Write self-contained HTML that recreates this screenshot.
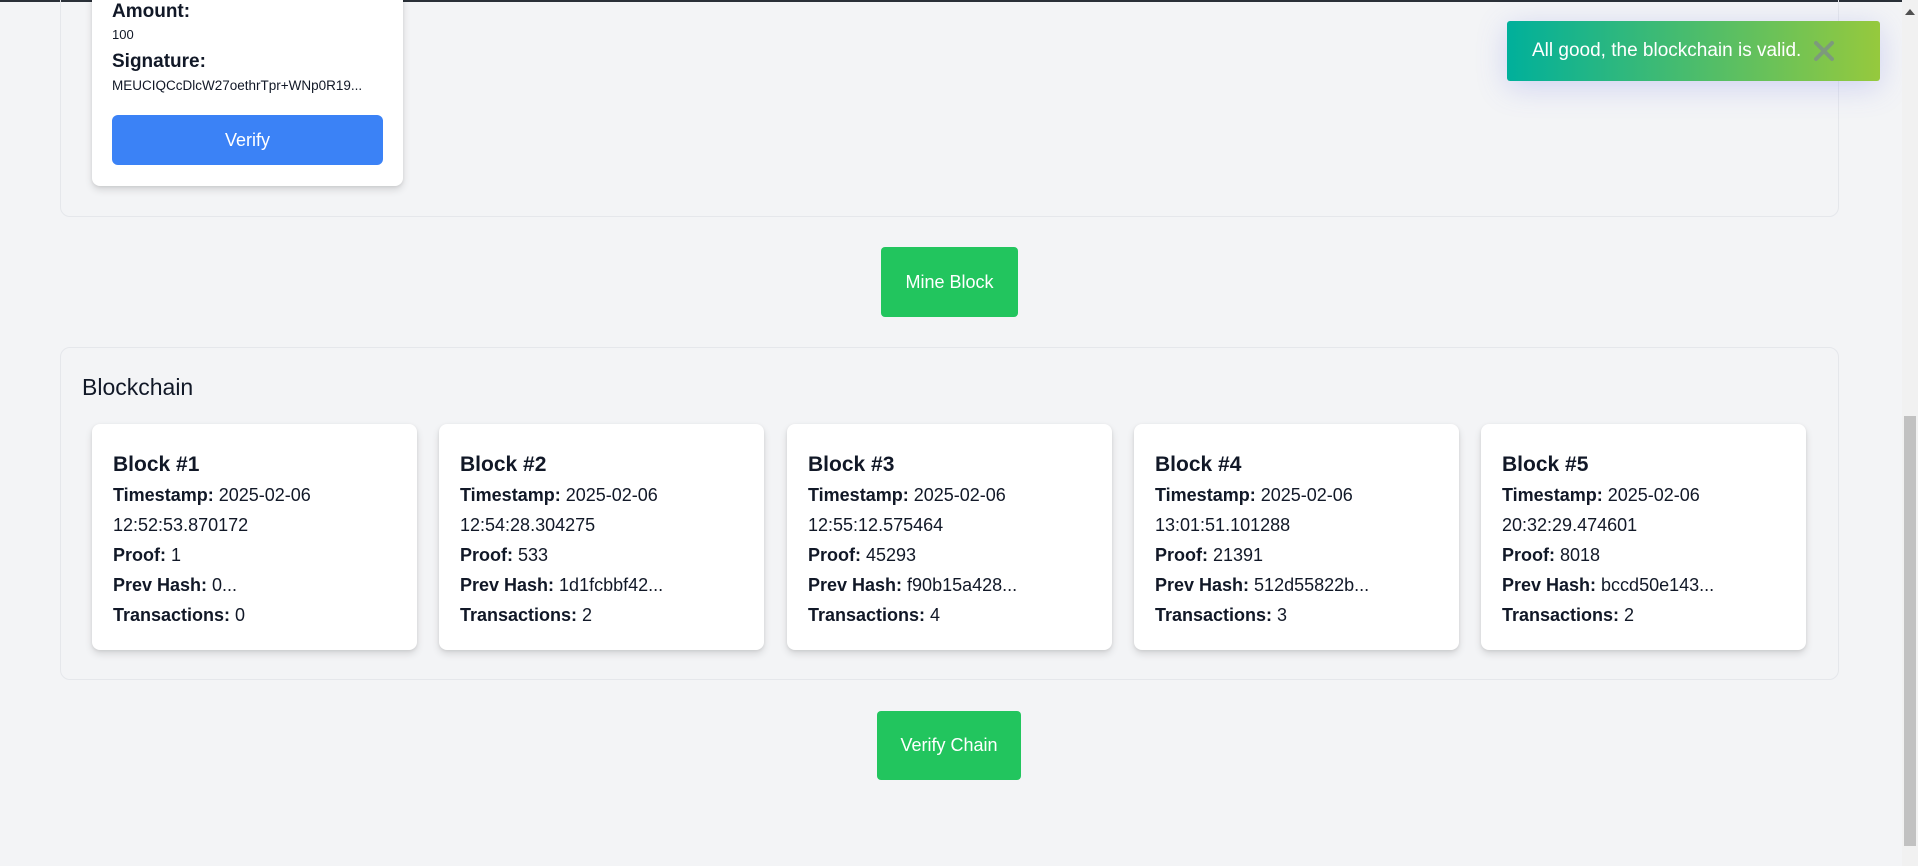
<!DOCTYPE html>
<html><head><meta charset="utf-8"><style>
*{box-sizing:border-box;margin:0;padding:0}
body{width:1918px;height:866px;background:#f3f4f6;font-family:"Liberation Sans",sans-serif;color:#111827;position:relative;overflow:hidden}
.topbar{position:absolute;left:0;top:0;width:1918px;height:2px;background:#2a3038}
.sec{position:absolute;left:60px;width:1779px;border:1px solid #e5e7eb;border-radius:10px}
.card{position:absolute;background:#fff;border-radius:8px;box-shadow:0 4px 8px rgba(0,0,0,.12),0 1px 3px rgba(0,0,0,.08)}
.btn{position:absolute;background:#22c55e;color:#fff;border-radius:4px;font-size:18px;display:flex;align-items:center;justify-content:center}
.blk{top:424px;width:325px;height:226px;padding:23px 21px}
.blk h3{font-size:21px;font-weight:bold;line-height:30px;margin-top:3px}
.blk p{font-size:18px;line-height:30px;white-space:nowrap}
.blk b{font-weight:bold}
.toast{position:absolute;left:1507px;top:21px;width:373px;height:60px;border-radius:3px;background:linear-gradient(90deg,#00b09b,#96c93d);color:#fff;font-size:19px;display:flex;align-items:center;padding-left:25px;box-shadow:0 6px 30px rgba(100,110,230,.25)}
.scroll{position:absolute;left:1902px;top:0;width:16px;height:866px;background:#f1f1f1}
.thumb{position:absolute;left:1904px;top:416px;width:12px;height:430px;background:#c1c1c1}
</style></head><body>
<div class="topbar"></div>
<div class="sec" style="top:-20px;height:237px"></div>
<div class="card" style="left:92px;top:-10px;width:311px;height:196px">
 <div style="position:absolute;left:20px;top:11px;font-size:19px;font-weight:bold;line-height:22px">Amount:</div>
 <div style="position:absolute;left:20px;top:37px;font-size:13px">100</div>
 <div style="position:absolute;left:20px;top:61px;font-size:19px;font-weight:bold;line-height:22px">Signature:</div>
 <div style="position:absolute;left:20px;top:88px;font-size:13.5px;white-space:nowrap">MEUCIQCcDlcW27oethrTpr+WNp0R19...</div>
 <div style="position:absolute;left:20px;top:125px;width:271px;height:50px;background:#3b82f6;border-radius:6px;color:#fff;font-size:18px;display:flex;align-items:center;justify-content:center">Verify</div>
</div>
<div class="btn" style="left:881px;top:247px;width:137px;height:70px">Mine Block</div>
<div class="sec" style="top:347px;height:333px"></div>
<div style="position:absolute;left:82px;top:374px;font-size:23px">Blockchain</div>
<div class="card blk" style="left:92px"><h3>Block #1</h3><p><b>Timestamp:</b> 2025-02-06</p><p>12:52:53.870172</p><p><b>Proof:</b> 1</p><p><b>Prev Hash:</b> 0...</p><p><b>Transactions:</b> 0</p></div>
<div class="card blk" style="left:439px"><h3>Block #2</h3><p><b>Timestamp:</b> 2025-02-06</p><p>12:54:28.304275</p><p><b>Proof:</b> 533</p><p><b>Prev Hash:</b> 1d1fcbbf42...</p><p><b>Transactions:</b> 2</p></div>
<div class="card blk" style="left:787px"><h3>Block #3</h3><p><b>Timestamp:</b> 2025-02-06</p><p>12:55:12.575464</p><p><b>Proof:</b> 45293</p><p><b>Prev Hash:</b> f90b15a428...</p><p><b>Transactions:</b> 4</p></div>
<div class="card blk" style="left:1134px"><h3>Block #4</h3><p><b>Timestamp:</b> 2025-02-06</p><p>13:01:51.101288</p><p><b>Proof:</b> 21391</p><p><b>Prev Hash:</b> 512d55822b...</p><p><b>Transactions:</b> 3</p></div>
<div class="card blk" style="left:1481px"><h3>Block #5</h3><p><b>Timestamp:</b> 2025-02-06</p><p>20:32:29.474601</p><p><b>Proof:</b> 8018</p><p><b>Prev Hash:</b> bccd50e143...</p><p><b>Transactions:</b> 2</p></div>
<div class="btn" style="left:877px;top:711px;width:144px;height:69px">Verify Chain</div>
<div class="toast">All good, the blockchain is valid.
<svg width="22" height="22" viewBox="0 0 22 22" style="margin-left:12px"><path d="M3 3L19 19M19 3L3 19" stroke="#7d9a7c" stroke-width="4" stroke-linecap="round"/></svg></div>
<div class="scroll"></div><div class="thumb"></div>
<svg style="position:absolute;left:1905px;top:9px" width="10" height="6"><path d="M0 6L5 0L10 6Z" fill="#505050"/></svg>
</body></html>
